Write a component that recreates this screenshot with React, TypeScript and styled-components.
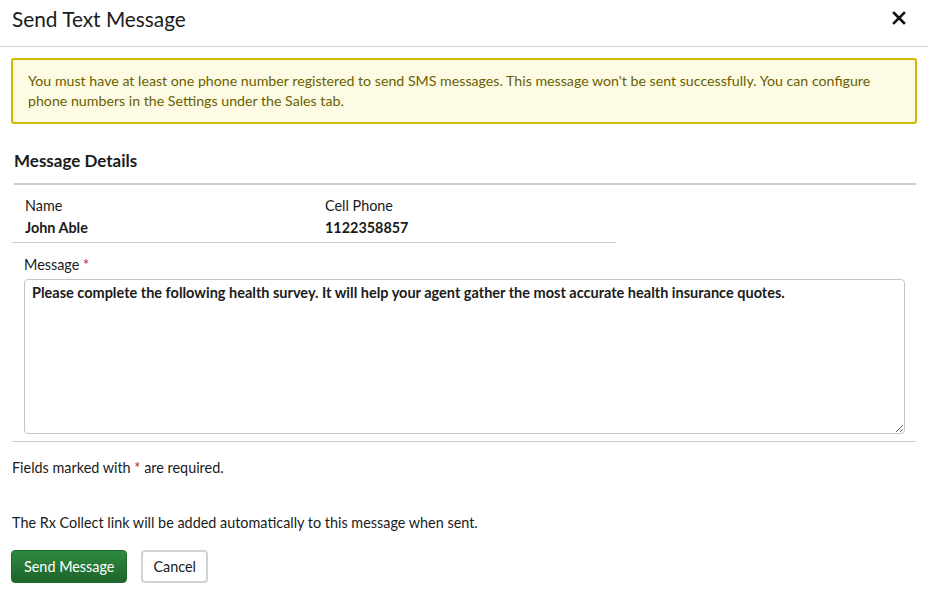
import styled, { createGlobalStyle } from 'styled-components';

const GlobalStyle = createGlobalStyle`
  * { box-sizing: border-box; }
  body {
    margin: 0;
    background: #ffffff;
    font-family: Lato, "Open Sans", sans-serif;
    color: #1b1b1b;
    font-size: 14px;
  }
`;

const App = () => {
  return (
    <>
      <GlobalStyle />
      <Dialog>
        <Header>
          <Title>Send Text Message</Title>
          <CloseButton aria-label="Close">
            <svg width="14" height="14" viewBox="0 0 14 14">
              <path d="M2 2 L12 12 M12 2 L2 12" stroke="#111" strokeWidth="2.6" strokeLinecap="square" />
            </svg>
          </CloseButton>
        </Header>
        <Body>
          <Alert>
            You must have at least one phone number registered to send SMS messages. This message won't be sent
            successfully. You can configure phone numbers in the Settings under the Sales tab.
          </Alert>
          <SectionTitle>Message Details</SectionTitle>
          <InfoRow>
            <InfoCell>
              <Label>Name</Label>
              <Value>John Able</Value>
            </InfoCell>
            <InfoCell>
              <Label>Cell Phone</Label>
              <Value>1122358857</Value>
            </InfoCell>
          </InfoRow>
          <MessageField>
            <Label>
              Message <Required>*</Required>
            </Label>
            <TextArea
              defaultValue="Please complete the following health survey. It will help your agent gather the most accurate health insurance quotes."
            />
          </MessageField>
          <Note>
            Fields marked with <Required>*</Required> are required.
          </Note>
          <Note $spaced>The Rx Collect link will be added automatically to this message when sent.</Note>
          <Actions>
            <PrimaryButton>Send Message</PrimaryButton>
            <SecondaryButton>Cancel</SecondaryButton>
          </Actions>
        </Body>
      </Dialog>
    </>
  );
};

export default App;

const Dialog = styled.div`
  width: 928px;
  min-height: 596px;
  background: #fff;
`;

const Header = styled.div`
  display: flex;
  align-items: center;
  justify-content: space-between;
  height: 47px;
  padding: 0 22px 10px 12px;
  border-bottom: 1px solid #cfd2d6;
`;

const Title = styled.h1`
  margin: 0;
  font-size: 20.8px;
  font-weight: 400;
  color: #1b1b1b;
`;

const CloseButton = styled.button`
  border: none;
  background: none;
  padding: 0;
  display: flex;
  cursor: pointer;
`;

const Body = styled.div`
  padding: 11px 11px 0 11px;
`;

const Alert = styled.div`
  background: #fdfbe4;
  border: 2px solid #cdbb00;
  border-radius: 3px;
  color: #6a5f00;
  padding: 11px 15px;
  line-height: 20px;
  font-size: 14.2px;
`;

const SectionTitle = styled.h2`
  margin: 26px 1px 0 3px;
  font-size: 17px;
  font-weight: 700;
  padding-bottom: 12px;
  border-bottom: 2px solid #c9ccd0;
`;

const InfoRow = styled.div`
  display: grid;
  grid-template-columns: 300px 304px;
  width: 604px;
  margin-left: 1px;
  padding: 10px 0 3px 13px;
  border-bottom: 1px solid #c9ccd0;
`;

const InfoCell = styled.div`
  display: flex;
  flex-direction: column;
`;

const Label = styled.div`
  font-size: 14.4px;
  line-height: 22px;
  color: #1b1b1b;
`;

const Value = styled.div`
  font-size: 14.4px;
  font-weight: 700;
  line-height: 22px;
`;

const Required = styled.span`
  color: #c8102e;
`;

const MessageField = styled.div`
  margin: 0 1px;
  padding: 11px 11px 7px 12px;
  border-bottom: 1px solid #c9ccd0;
  display: flex;
  flex-direction: column;
  gap: 3px;
`;

const TextArea = styled.textarea`
  height: 155px;
  width: 100%;
  border: 1px solid #c2c6cb;
  border-radius: 4px;
  padding: 3px 7px;
  font-family: inherit;
  font-size: 14.5px;
  font-weight: 700;
  color: #1b1b1b;
  line-height: 20px;
  resize: vertical;
`;

const Note = styled.p<{ $spaced?: boolean }>`
  margin: ${(p) => (p.$spaced ? '35px' : '16px')} 0 0 1px;
  font-size: 14.4px;
  line-height: 20px;
`;

const Actions = styled.div`
  display: flex;
  gap: 14px;
  margin-top: 17px;
`;

const PrimaryButton = styled.button`
  height: 33px;
  padding: 0 12px;
  border: 1px solid #1d6a2a;
  border-radius: 4px;
  background: linear-gradient(#2f8a3f, #1e6429);
  color: #fff;
  font-family: inherit;
  font-size: 14.4px;
  cursor: pointer;
`;

const SecondaryButton = styled.button`
  height: 33px;
  padding: 0 10px;
  border: 2px solid #cfd3d8;
  border-radius: 4px;
  background: #fff;
  color: #1b1b1b;
  font-family: inherit;
  font-size: 14.4px;
  cursor: pointer;
`;
